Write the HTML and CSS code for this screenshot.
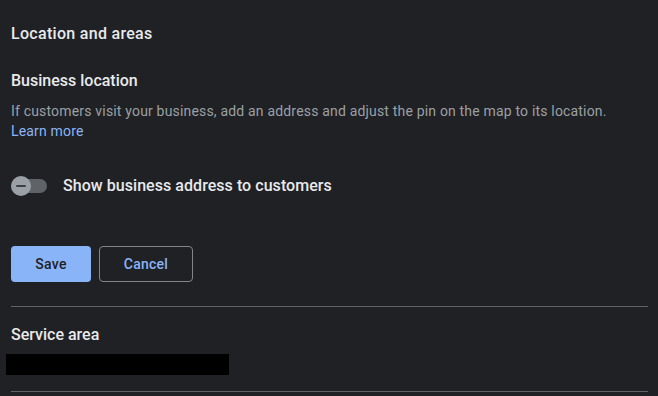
FILE: index.html
```html
<!DOCTYPE html>
<html>
<head>
<meta charset="utf-8">
<link rel="stylesheet" href="styles.css">
</head>
<body>
<main class="page">
  <h1 class="title">Location and areas</h1>
  <section class="section">
    <h2 class="subtitle">Business location</h2>
    <p class="desc">If customers visit your business, add an address and adjust the pin on the map to its location.<br><a class="link" href="#">Learn more</a></p>
    <div class="toggle-row">
      <span class="toggle"><span class="knob"><span class="minus"></span></span></span>
      <span class="toggle-label">Show business address to customers</span>
    </div>
    <div class="actions">
      <button class="btn btn-primary">Save</button>
      <button class="btn btn-outline">Cancel</button>
    </div>
  </section>
  <hr class="divider">
  <section class="service">
    <h2 class="subtitle">Service area</h2>
    <div class="redacted"></div>
  </section>
  <hr class="divider">
</main>
</body>
</html>
```
FILE: styles.css
```css
* { box-sizing: border-box; }
html, body {
  margin: 0;
  background: #202124;
  font-family: Roboto, "Noto Sans", Arial, sans-serif;
  color: #e8eaed;
}
.page {
  padding: 22px 10px 0 11px;
  display: flex;
  flex-direction: column;
}
.title {
  margin: 0;
  font-size: 16px;
  line-height: 24px;
  font-weight: 500;
  letter-spacing: 0.3px;
}
.section {
  margin-top: 23px;
}
.subtitle {
  margin: 0;
  font-size: 16px;
  line-height: 24px;
  font-weight: 500;
  color: #e8eaed;
}
.desc {
  margin: 8px 0 0;
  font-size: 14px;
  line-height: 20px;
  color: #9aa0a6;
  letter-spacing: 0.18px;
}
.link {
  color: #8ab4f8;
  text-decoration: none;
}
.toggle-row {
  margin-top: 33px;
  display: flex;
  align-items: center;
  height: 24px;
}
.toggle {
  position: relative;
  width: 36px;
  height: 14px;
  border-radius: 7px;
  background: #5f6368;
  margin-right: 16px;
  flex: none;
}
.knob {
  position: absolute;
  left: 0;
  top: -3px;
  width: 20px;
  height: 20px;
  border-radius: 50%;
  background: #9aa0a6;
  display: flex;
  align-items: center;
  justify-content: center;
}
.minus {
  width: 10px;
  height: 2px;
  background: #3c4043;
  border-radius: 1px;
}
.toggle-label {
  font-size: 16px;
  font-weight: 500;
  color: #e8eaed;
  line-height: 24px;
  letter-spacing: 0.05px;
}
.actions {
  margin-top: 48px;
  display: flex;
  gap: 8px;
}
.btn {
  height: 36px;
  border-radius: 4px;
  font-family: Roboto, "Noto Sans", Arial, sans-serif;
  font-size: 14px;
  font-weight: 500;
  letter-spacing: 0.25px;
  padding: 0;
  cursor: pointer;
}
.btn-primary {
  width: 80px;
  background: #8ab4f8;
  color: #202124;
  border: none;
}
.btn-outline {
  width: 94px;
  background: transparent;
  color: #8ab4f8;
  border: 1px solid #80868b;
}
.divider {
  margin: 24px 0 0;
  border: none;
  height: 1px;
  background: #5f6368;
}
.service {
  margin-top: 16px;
}
.redacted {
  margin: 7px 0 0 -5px;
  width: 223px;
  height: 21px;
  background: #000;
}
.service + .divider {
  margin-top: 16px;
}
```
